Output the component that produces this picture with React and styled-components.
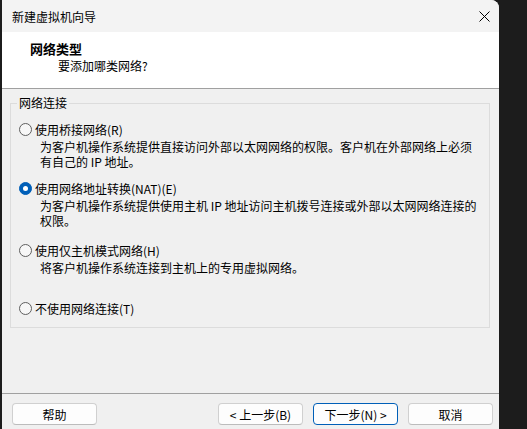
import React from "react";
import styled, { createGlobalStyle } from "styled-components";

const GlobalStyle = createGlobalStyle`
  html, body {
    margin: 0;
    padding: 0;
    background: #1c1c1c;
    overflow: hidden;
  }
  body {
    font-family: "Noto Sans CJK SC", "Noto Sans", sans-serif;
    font-size: 12px;
    color: #000;
  }
`;

const Screen = styled.div`
  width: 527px;
  height: 429px;
  padding-left: 2px;
  box-sizing: border-box;
`;

const Window = styled.div`
  width: 497px;
  height: 440px;
  background: #f0f0f0;
  border-top-right-radius: 8px;
  overflow: hidden;
  display: flex;
  flex-direction: column;
`;

const TitleBar = styled.div`
  height: 32px;
  flex: none;
  display: flex;
  align-items: center;
  justify-content: space-between;
  padding-left: 10px;
  background: #f3f3f3;
  line-height: 15px;
`;

const CloseButton = styled.div`
  width: 30px;
  height: 32px;
  display: flex;
  align-items: center;
  justify-content: center;
`;

const Header = styled.div`
  height: 57px;
  flex: none;
  box-sizing: border-box;
  background: #fff;
  border-bottom: 1px solid #a0a0a0;
  padding-top: 9px;
`;

const Heading = styled.div`
  padding-left: 28px;
  font-size: 13px;
  font-weight: 700;
  line-height: 16px;
`;

const SubHeading = styled.div`
  padding-left: 56px;
  margin-top: 1px;
  line-height: 15px;
`;

const Body = styled.div`
  height: 304px;
  flex: none;
  box-sizing: border-box;
  padding: 7px 0 0 8px;
`;

const Group = styled.fieldset`
  width: 480px;
  height: 232px;
  box-sizing: border-box;
  margin: 0;
  padding: 0 0 0 8px;
  border: 1px solid #dcdcdc;
  border-radius: 0;
`;

const Legend = styled.legend`
  margin-left: -2px;
  padding: 0 2px;
  line-height: 14px;
`;

const Option = styled.div`
  margin-top: ${({ $gap }) => $gap}px;
`;

const OptionRow = styled.div`
  display: flex;
  align-items: center;
  gap: 3px;
  line-height: 15px;
`;

const Radio = styled.span`
  width: 13px;
  height: 13px;
  box-sizing: border-box;
  border-radius: 50%;
  flex: none;
  display: flex;
  align-items: center;
  justify-content: center;
  border: 1px solid ${({ $checked }) => ($checked ? "#005fb8" : "#5f5f5f")};
  background: ${({ $checked }) => ($checked ? "#005fb8" : "#f7f7f7")};

  &::after {
    content: "";
    display: ${({ $checked }) => ($checked ? "block" : "none")};
    width: 5px;
    height: 5px;
    border-radius: 50%;
    background: #fff;
  }
`;

const Description = styled.div`
  padding-left: 21px;
  margin-top: 2px;
  line-height: 15px;
  width: 440px;
`;

const Footer = styled.div`
  flex: none;
  border-top: 1px solid #a0a0a0;
  display: flex;
  padding: 9px 0 0 10px;
`;

const Button = styled.div`
  width: 85px;
  height: 22px;
  box-sizing: border-box;
  display: flex;
  align-items: center;
  justify-content: center;
  background: #fdfdfd;
  border: 1px solid ${({ $primary }) => ($primary ? "#005fb8" : "#d0d0d0")};
  border-bottom-color: ${({ $primary }) => ($primary ? "#005fb8" : "#bcbcbc")};
  border-radius: 4px;
  line-height: 15px;
  margin-left: ${({ $ml }) => $ml || 0}px;
`;

const options = [
  {
    label: "使用桥接网络(R)",
    desc: "为客户机操作系统提供直接访问外部以太网网络的权限。客户机在外部网络上必须有自己的 IP 地址。",
    gap: 12,
  },
  {
    label: "使用网络地址转换(NAT)(E)",
    desc: "为客户机操作系统提供使用主机 IP 地址访问主机拨号连接或外部以太网网络连接的权限。",
    gap: 12,
    checked: true,
  },
  {
    label: "使用仅主机模式网络(H)",
    desc: "将客户机操作系统连接到主机上的专用虚拟网络。",
    gap: 15,
  },
  { label: "不使用网络连接(T)", gap: 26 },
];

const App = () => {
  return (
    <Screen>
      <GlobalStyle />
      <Window>
        <TitleBar>
          <span>新建虚拟机向导</span>
          <CloseButton>
            <svg width="11" height="11" viewBox="0 0 11 11">
              <path d="M0.5 0.5 L10.5 10.5 M10.5 0.5 L0.5 10.5" stroke="#000" strokeWidth="1" />
            </svg>
          </CloseButton>
        </TitleBar>
        <Header>
          <Heading>网络类型</Heading>
          <SubHeading>要添加哪类网络?</SubHeading>
        </Header>
        <Body>
          <Group>
            <Legend>网络连接</Legend>
            {options.map((o) => (
              <Option key={o.label} $gap={o.gap}>
                <OptionRow>
                  <Radio $checked={o.checked} />
                  <span>{o.label}</span>
                </OptionRow>
                {o.desc && <Description>{o.desc}</Description>}
              </Option>
            ))}
          </Group>
        </Body>
        <Footer>
          <Button>帮助</Button>
          <Button $ml={121}>&lt; 上一步(B)</Button>
          <Button $ml={10} $primary>
            下一步(N) &gt;
          </Button>
          <Button $ml={10}>取消</Button>
        </Footer>
      </Window>
    </Screen>
  );
};

export default App;
